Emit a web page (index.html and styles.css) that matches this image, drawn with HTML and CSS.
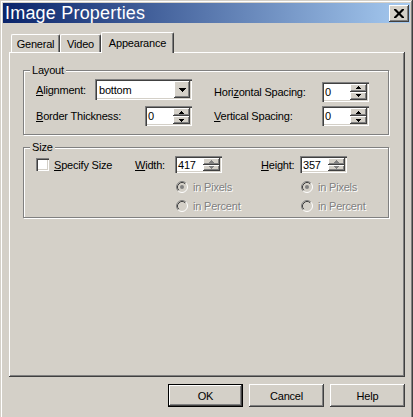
FILE: index.html
```html
<!DOCTYPE html>
<html>
<head>
<meta charset="utf-8">
<title>Image Properties</title>
<link rel="stylesheet" href="styles.css">
</head>
<body>
<div class="window">
  <div class="titlebar">
    <span class="title">Image Properties</span>
    <button class="close" aria-label="Close">
      <svg width="10" height="9" viewBox="0 0 10 9"><path d="M0 0h2l3 3 3-3h2v1L6.5 4.5 10 8v1H8L5 6 2 9H0V8l3.5-3.5L0 1z" fill="#000"/></svg>
    </button>
  </div>

  <div class="tabs">
    <div class="tab tab-general">General</div>
    <div class="tab tab-video">Video</div>
    <div class="tab tab-appearance active">Appearance</div>
  </div>

  <div class="panel">
    <div class="group group-layout">
      <div class="group-title">Layout</div>
      <div class="layout-cols">
        <div class="col col-left">
          <div class="row r1">
            <span><u>A</u>lignment:</span>
            <div class="select">
              <span class="select-text">bottom</span>
              <span class="select-btn"><svg width="7" height="4" viewBox="0 0 7 4"><path d="M0 0h7v1h-1v1h-1v1h-1v1h-1v-1h-1v-1h-1v-1h-1z" fill="#000"/></svg></span>
            </div>
          </div>
          <div class="row r2">
            <span><u>B</u>order Thickness:</span>
            <div class="spin">
              <span class="spin-text">0</span>
              <span class="spin-btns">
                <span class="sb"><svg width="5" height="3" viewBox="0 0 5 3"><path d="M2 0h1v1h1v1h1v1H0V2h1V1h1z" fill="#000"/></svg></span>
                <span class="sb"><svg width="5" height="3" viewBox="0 0 5 3"><path d="M0 0h5v1h-1v1h-1v1h-1V2H1V1H0z" fill="#000"/></svg></span>
              </span>
            </div>
          </div>
        </div>
        <div class="col col-right">
          <div class="row r1">
            <span>Hori<u>z</u>ontal Spacing:</span>
            <div class="spin">
              <span class="spin-text">0</span>
              <span class="spin-btns">
                <span class="sb"><svg width="5" height="3" viewBox="0 0 5 3"><path d="M2 0h1v1h1v1h1v1H0V2h1V1h1z" fill="#000"/></svg></span>
                <span class="sb"><svg width="5" height="3" viewBox="0 0 5 3"><path d="M0 0h5v1h-1v1h-1v1h-1V2H1V1H0z" fill="#000"/></svg></span>
              </span>
            </div>
          </div>
          <div class="row r2">
            <span><u>V</u>ertical Spacing:</span>
            <div class="spin">
              <span class="spin-text">0</span>
              <span class="spin-btns">
                <span class="sb"><svg width="5" height="3" viewBox="0 0 5 3"><path d="M2 0h1v1h1v1h1v1H0V2h1V1h1z" fill="#000"/></svg></span>
                <span class="sb"><svg width="5" height="3" viewBox="0 0 5 3"><path d="M0 0h5v1h-1v1h-1v1h-1V2H1V1H0z" fill="#000"/></svg></span>
              </span>
            </div>
          </div>
        </div>
      </div>
    </div>

    <div class="group group-size">
      <div class="group-title">Size</div>
      <div class="size-content">
        <div class="check-item">
          <span class="checkbox"></span>
          <span><u>S</u>pecify Size</span>
        </div>
        <div class="dim-group dim-width">
          <span class="dim-label"><u>W</u>idth:</span>
          <div class="spin small">
            <span class="spin-text">417</span>
            <span class="spin-btns">
              <span class="sb"><svg width="5" height="3" viewBox="0 0 5 3"><path d="M2 0h1v1h1v1h1v1H0V2h1V1h1z" fill="#808080"/></svg></span>
              <span class="sb"><svg width="5" height="3" viewBox="0 0 5 3"><path d="M0 0h5v1h-1v1h-1v1h-1V2H1V1H0z" fill="#808080"/></svg></span>
            </span>
          </div>
          <div class="radios">
            <div class="radio">
              <svg width="12" height="12" viewBox="0 0 12 12"><circle cx="6" cy="6" r="5" fill="#d4d0c8"/><path d="M2.11 9.89A5.5 5.5 0 0 1 9.89 2.11" stroke="#808080" fill="none"/><path d="M9.89 2.11A5.5 5.5 0 0 1 2.11 9.89" stroke="#fff" fill="none"/><path d="M2.82 9.18A4.5 4.5 0 0 1 9.18 2.82" stroke="#404040" fill="none"/><circle cx="6" cy="6" r="2" fill="#808080"/></svg>
              <span class="disabled">in Pixels</span>
            </div>
            <div class="radio">
              <svg width="12" height="12" viewBox="0 0 12 12"><circle cx="6" cy="6" r="5" fill="#d4d0c8"/><path d="M2.11 9.89A5.5 5.5 0 0 1 9.89 2.11" stroke="#808080" fill="none"/><path d="M9.89 2.11A5.5 5.5 0 0 1 2.11 9.89" stroke="#fff" fill="none"/><path d="M2.82 9.18A4.5 4.5 0 0 1 9.18 2.82" stroke="#404040" fill="none"/></svg>
              <span class="disabled">in Percent</span>
            </div>
          </div>
        </div>
        <div class="dim-group dim-height">
          <span class="dim-label"><u>H</u>eight:</span>
          <div class="spin small">
            <span class="spin-text">357</span>
            <span class="spin-btns">
              <span class="sb"><svg width="5" height="3" viewBox="0 0 5 3"><path d="M2 0h1v1h1v1h1v1H0V2h1V1h1z" fill="#808080"/></svg></span>
              <span class="sb"><svg width="5" height="3" viewBox="0 0 5 3"><path d="M0 0h5v1h-1v1h-1v1h-1V2H1V1H0z" fill="#808080"/></svg></span>
            </span>
          </div>
          <div class="radios">
            <div class="radio">
              <svg width="12" height="12" viewBox="0 0 12 12"><circle cx="6" cy="6" r="5" fill="#d4d0c8"/><path d="M2.11 9.89A5.5 5.5 0 0 1 9.89 2.11" stroke="#808080" fill="none"/><path d="M9.89 2.11A5.5 5.5 0 0 1 2.11 9.89" stroke="#fff" fill="none"/><path d="M2.82 9.18A4.5 4.5 0 0 1 9.18 2.82" stroke="#404040" fill="none"/><circle cx="6" cy="6" r="2" fill="#808080"/></svg>
              <span class="disabled">in Pixels</span>
            </div>
            <div class="radio">
              <svg width="12" height="12" viewBox="0 0 12 12"><circle cx="6" cy="6" r="5" fill="#d4d0c8"/><path d="M2.11 9.89A5.5 5.5 0 0 1 9.89 2.11" stroke="#808080" fill="none"/><path d="M9.89 2.11A5.5 5.5 0 0 1 2.11 9.89" stroke="#fff" fill="none"/><path d="M2.82 9.18A4.5 4.5 0 0 1 9.18 2.82" stroke="#404040" fill="none"/></svg>
              <span class="disabled">in Percent</span>
            </div>
          </div>
        </div>
      </div>
    </div>
  </div>

  <div class="buttons">
    <button class="btn default">OK</button>
    <button class="btn">Cancel</button>
    <button class="btn">Help</button>
  </div>
</div>
</body>
</html>
```

FILE: styles.css
```css
html, body {
  margin: 0;
  padding: 0;
  background: #d4d0c8;
  overflow: hidden;
}

body {
  font-family: "Liberation Sans", Arial, sans-serif;
  font-size: 11px;
  letter-spacing: -0.2px;
  color: #000;
}

u { text-decoration: underline; text-underline-offset: 1px; }

.window {
  width: 413px;
  height: 420px;
  box-sizing: border-box;
  padding: 3px;
  box-shadow: inset -1px -1px #404040, inset 1px 1px #d4d0c8, inset -2px -2px #808080, inset 2px 2px #fff;
}

/* Title bar */
.titlebar {
  height: 20px;
  display: flex;
  align-items: center;
  padding-left: 2px;
  background: linear-gradient(to right, #0a246a, #a6caf0);
}

.title {
  flex: 1;
  color: #fff;
  font-size: 18px;
  line-height: 20px;
  letter-spacing: 0.2px;
}

.close {
  width: 20px;
  height: 17px;
  margin-right: 1px;
  padding: 0;
  border: 0;
  background: #d4d0c8;
  display: flex;
  align-items: center;
  justify-content: center;
  box-shadow: inset -1px -1px #404040, inset 1px 1px #fff, inset -2px -2px #808080;
}

.close svg { display: block; }

/* Tabs */
.tabs {
  display: flex;
  align-items: flex-end;
  height: 21px;
  margin: 9px 0 -1px 8px;
}

.tab {
  height: 18px;
  margin-bottom: 1px;
  box-sizing: border-box;
  border-top: 1px solid #fff;
  border-left: 1px solid #fff;
  border-right: 1px solid #404040;
  border-radius: 2px 2px 0 0;
  box-shadow: inset -1px 0 #808080;
  display: flex;
  align-items: center;
  justify-content: center;
  background: #d4d0c8;
}

.tab-general { width: 49px; }
.tab-video { width: 41px; }
.tab-appearance { width: 73px; }

.tab.active {
  height: 21px;
  margin-bottom: 0;
  position: relative;
  z-index: 1;
  padding-bottom: 1px;
}

/* Panel */
.panel {
  position: relative;
  width: 396px;
  height: 325px;
  margin-left: 6px;
  box-sizing: border-box;
  padding: 18px 0 0 14px;
  box-shadow: inset -1px -1px #404040, inset 1px 1px #fff, inset -2px -2px #808080;
}

.group {
  width: 366px;
  box-sizing: border-box;
  border: 1px solid #808080;
  box-shadow: inset 1px 1px #fff, 1px 1px #fff;
  padding-left: 12px;
}

.group-layout { height: 65px; }
.group-size { height: 71px; margin-top: 12px; }

.group-title {
  width: fit-content;
  margin: -7px 0 0 -6px;
  padding: 0 2px;
  line-height: 13px;
  background: #d4d0c8;
}

/* Layout group */
.layout-cols {
  display: flex;
  gap: 22px;
  margin-top: 2px;
}

.col {
  display: flex;
  flex-direction: column;
  gap: 6px;
}

.col-left { width: 156px; }
.col-right {
  width: 155px;
  padding-top: 2px;
  gap: 4px;
}

.row {
  display: flex;
  align-items: center;
  justify-content: space-between;
}

.r1 { height: 21px; }
.r2 { height: 20px; }

/* sunken fields */
.select, .spin, .checkbox {
  box-sizing: border-box;
  background: #fff;
  box-shadow: inset 1px 1px #808080, inset 2px 2px #404040, inset -1px -1px #fff, inset -2px -2px #d4d0c8;
}

.select {
  width: 97px;
  height: 21px;
  padding: 2px;
  display: flex;
  align-items: center;
}

.select-text {
  flex: 1;
  padding-left: 2px;
}

.select-btn {
  width: 16px;
  height: 17px;
  display: flex;
  align-items: center;
  justify-content: center;
  background: #d4d0c8;
  box-shadow: inset -1px -1px #404040, inset 1px 1px #fff, inset -2px -2px #808080;
}

.spin {
  width: 47px;
  height: 20px;
  padding: 2px;
  display: flex;
}

.spin.small { height: 17px; }

.spin-text {
  flex: 1;
  padding-left: 1px;
  display: flex;
  align-items: center;
}

.spin-btns {
  width: 17px;
  display: flex;
  flex-direction: column;
}

.sb {
  flex: 1;
  display: flex;
  align-items: center;
  justify-content: center;
  background: #d4d0c8;
  box-shadow: inset -1px -1px #404040, inset 1px 1px #fff, inset -2px -2px #808080;
}

.sb svg { display: block; }

/* Size group */
.size-content {
  display: flex;
  align-items: flex-start;
  margin-top: 2px;
}

.check-item {
  width: 99px;
  height: 17px;
  display: flex;
  align-items: center;
  gap: 5px;
}

.checkbox {
  width: 13px;
  height: 13px;
  flex: none;
}

.dim-group {
  display: grid;
  grid-template-columns: 40px 47px;
}

.dim-height {
  grid-template-columns: 39px 47px;
  margin-left: 39px;
}

.dim-label {
  height: 17px;
  display: flex;
  align-items: center;
}

.radios {
  grid-column: 2;
  margin-top: 4px;
  margin-left: 1px;
  white-space: nowrap;
}

.radio {
  height: 19px;
  display: flex;
  align-items: center;
  gap: 5px;
}

.radio svg { display: block; flex: none; }

.disabled {
  color: #808080;
  text-shadow: 1px 1px 0 #fff;
}

/* Buttons */
.buttons {
  width: 396px;
  margin: 7px 0 0 6px;
  display: flex;
  justify-content: flex-end;
  gap: 6px;
}

.btn {
  width: 75px;
  height: 23px;
  padding: 0;
  border: 0;
  font: inherit;
  letter-spacing: inherit;
  color: #000;
  background: #d4d0c8;
  box-shadow: inset -1px -1px #404040, inset 1px 1px #fff, inset -2px -2px #808080;
}

.btn.default {
  box-shadow: inset 0 0 0 1px #000, inset -2px -2px #404040, inset 2px 2px #fff, inset -3px -3px #808080;
}
```
